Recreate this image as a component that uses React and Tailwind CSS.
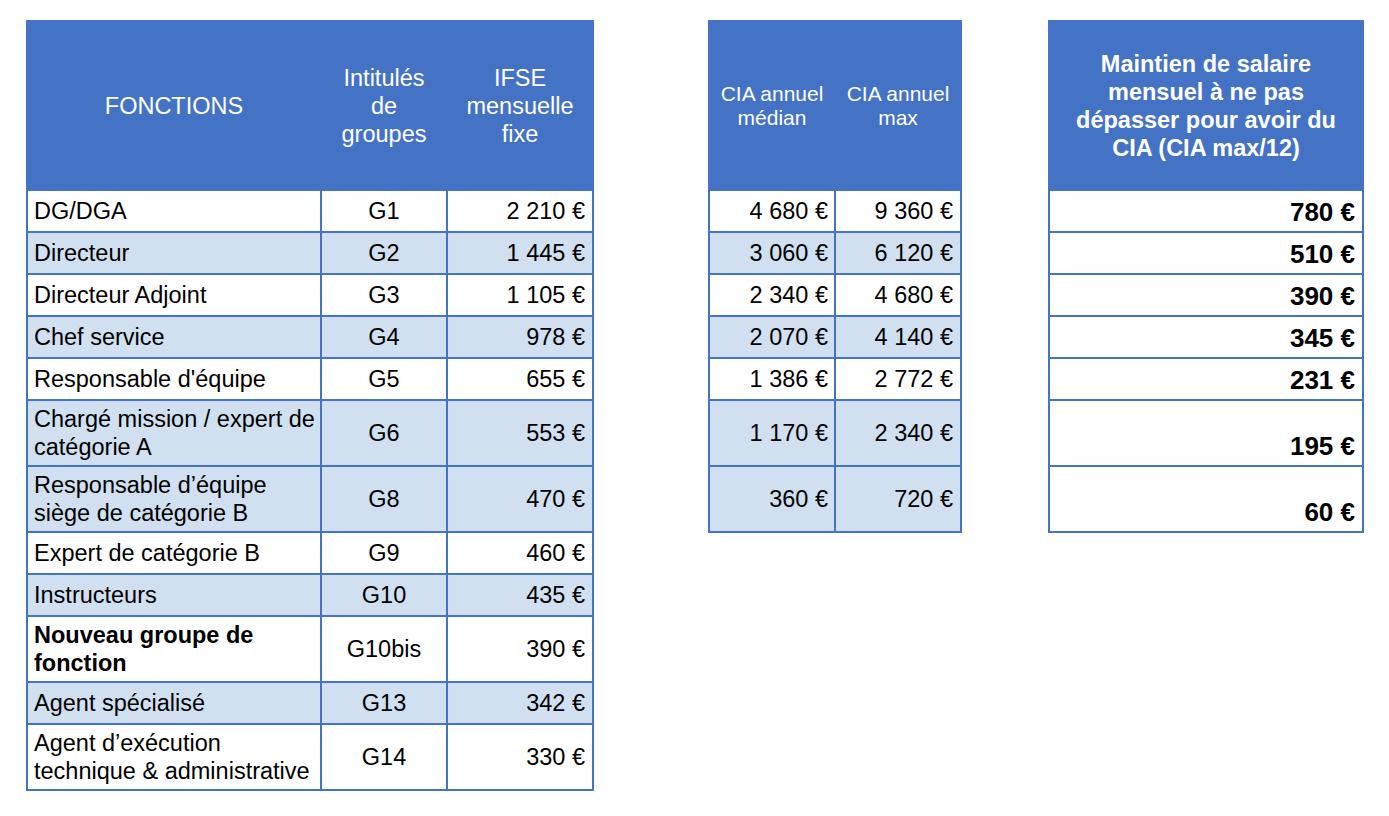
import React from "react";

const LB = "bg-[#D0E0F1]";
const font = { fontFamily: '"Liberation Sans", Arial, sans-serif' };

const t1 = [
  { f: ["DG/DGA"], g: "G1", v: "2 210 €", blue: false },
  { f: ["Directeur"], g: "G2", v: "1 445 €", blue: true },
  { f: ["Directeur Adjoint"], g: "G3", v: "1 105 €", blue: false },
  { f: ["Chef service"], g: "G4", v: "978 €", blue: true },
  { f: ["Responsable d'équipe"], g: "G5", v: "655 €", blue: false },
  { f: ["Chargé mission / expert de", "catégorie A"], g: "G6", v: "553 €", blue: true },
  { f: ["Responsable d’équipe", "siège de catégorie B"], g: "G8", v: "470 €", blue: true },
  { f: ["Expert de catégorie B"], g: "G9", v: "460 €", blue: false },
  { f: ["Instructeurs"], g: "G10", v: "435 €", blue: true },
  { f: ["Nouveau groupe de", "fonction"], g: "G10bis", v: "390 €", blue: false, bold: true },
  { f: ["Agent spécialisé"], g: "G13", v: "342 €", blue: true },
  { f: ["Agent d’exécution", "technique & administrative"], g: "G14", v: "330 €", blue: false },
];

const t2 = [
  { a: "4 680 €", b: "9 360 €", blue: false, tall: false },
  { a: "3 060 €", b: "6 120 €", blue: true, tall: false },
  { a: "2 340 €", b: "4 680 €", blue: false, tall: false },
  { a: "2 070 €", b: "4 140 €", blue: true, tall: false },
  { a: "1 386 €", b: "2 772 €", blue: false, tall: false },
  { a: "1 170 €", b: "2 340 €", blue: true, tall: true },
  { a: "360 €", b: "720 €", blue: true, tall: true },
];

const t3 = [
  { v: "780 €", tall: false },
  { v: "510 €", tall: false },
  { v: "390 €", tall: false },
  { v: "345 €", tall: false },
  { v: "231 €", tall: false },
  { v: "195 €", tall: true },
  { v: "60 €", tall: true },
];

export default function App() {
  return (
    <div className="flex items-start pl-[26px] pt-[20px] bg-white min-h-[816px] text-black" style={font}>
      {/* Table 1 */}
      <div className="grid grid-cols-[292px_124px_144px] gap-[2px] bg-[#4472C4] p-[2px] text-[23.5px] leading-[28px]">
        <div className="h-[167px] flex items-center justify-center text-center text-white">FONCTIONS</div>
        <div className="h-[167px] flex items-center justify-center text-center text-white">
          Intitulés<br />de<br />groupes
        </div>
        <div className="h-[167px] flex items-center justify-center text-center text-white">
          IFSE<br />mensuelle<br />fixe
        </div>
        {t1.map((r, i) => {
          const h = r.f.length > 1 ? "h-[64px]" : "h-[40px]";
          const bg = r.blue ? LB : "bg-white";
          return (
            <React.Fragment key={i}>
              <div className={`${h} ${bg} flex flex-col justify-center pl-[6px] ${r.bold ? "font-bold" : ""}`}>
                {r.f.map((l, j) => (
                  <span key={j} className="whitespace-nowrap">{l}</span>
                ))}
              </div>
              <div className={`${h} ${bg} flex items-center justify-center`}>{r.g}</div>
              <div className={`${h} ${bg} flex items-center justify-end pr-[7px]`}>{r.v}</div>
            </React.Fragment>
          );
        })}
      </div>

      {/* Table 2 */}
      <div className="ml-[114px] grid grid-cols-[124px_124px] gap-[2px] bg-[#4472C4] p-[2px] text-[23.5px] leading-[28px]">
        <div className="h-[167px] flex items-center justify-center text-center text-white text-[21px] leading-[24px]">
          CIA annuel<br />médian
        </div>
        <div className="h-[167px] flex items-center justify-center text-center text-white text-[21px] leading-[24px]">
          CIA annuel<br />max
        </div>
        {t2.map((r, i) => {
          const h = r.tall ? "h-[64px]" : "h-[40px]";
          const bg = r.blue ? LB : "bg-white";
          return (
            <React.Fragment key={i}>
              <div className={`${h} ${bg} flex items-center justify-end pr-[6px]`}>{r.a}</div>
              <div className={`${h} ${bg} flex items-center justify-end pr-[7px]`}>{r.b}</div>
            </React.Fragment>
          );
        })}
      </div>

      {/* Table 3 */}
      <div className="ml-[86px] grid grid-cols-[312px] gap-[2px] bg-[#4472C4] p-[2px]">
        <div className="h-[167px] flex items-center justify-center text-center text-white font-bold text-[23.5px] leading-[28px]">
          Maintien de salaire<br />mensuel à ne pas<br />dépasser pour avoir du<br />CIA (CIA max/12)
        </div>
        {t3.map((r, i) => (
          <div
            key={i}
            className={`${r.tall ? "h-[64px]" : "h-[40px]"} bg-white flex items-end justify-end pr-[7px] pb-[4px] font-bold text-[26px] leading-[30px]`}
          >
            {r.v}
          </div>
        ))}
      </div>
    </div>
  );
}
